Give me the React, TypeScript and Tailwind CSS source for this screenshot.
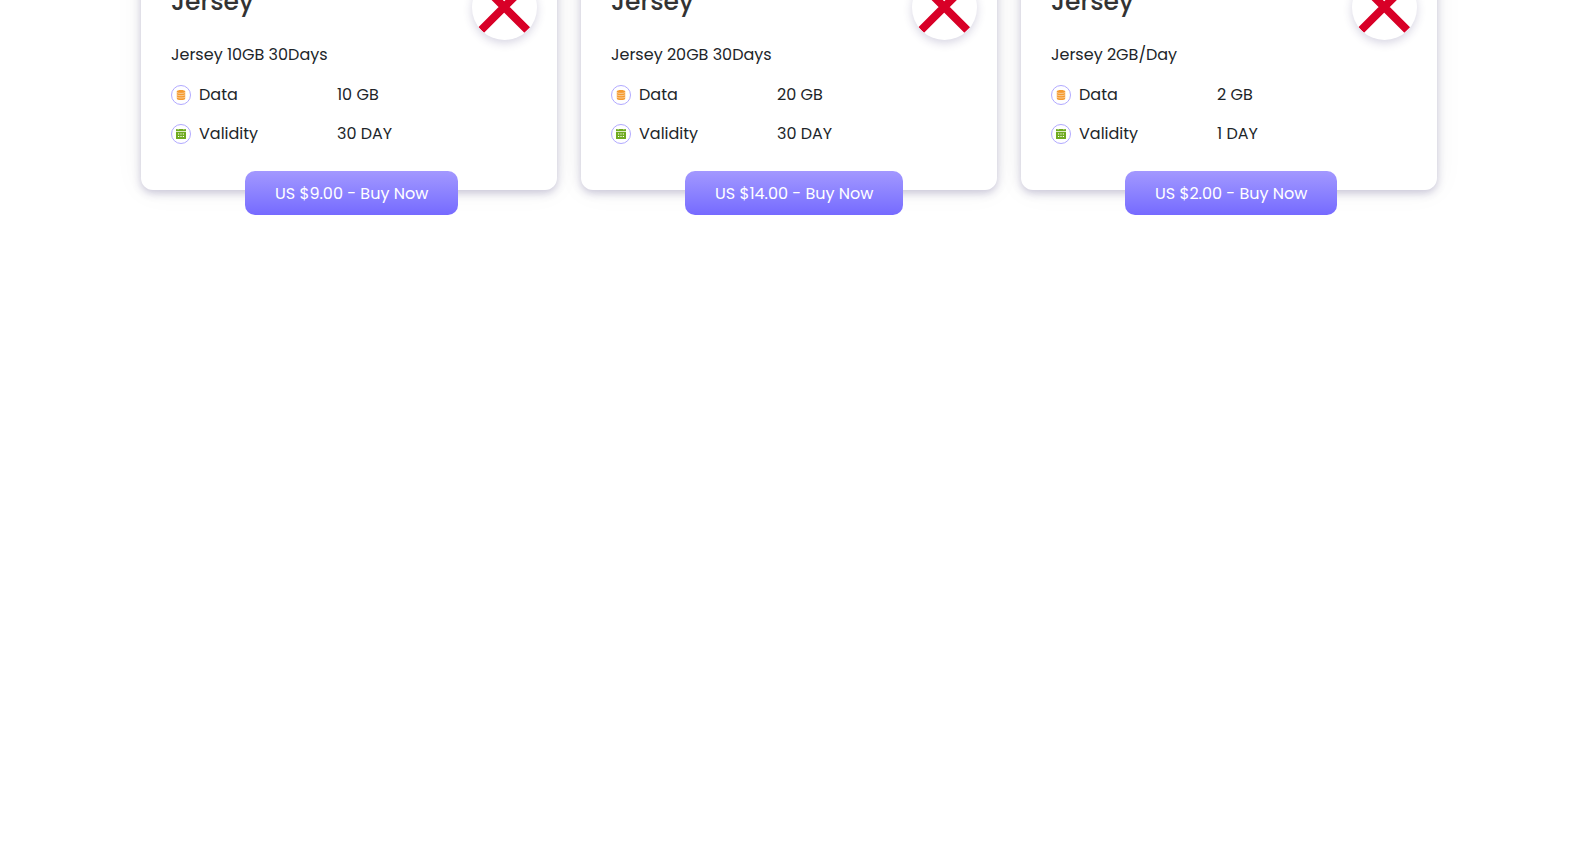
import React from 'react';
interface Plan {
  id: number;
  country: string;
  title: string;
  data: string;
  validity: string;
  price: string;
}
const plans: Plan[] = [
  { id: 1, country: 'Jersey', title: 'Jersey 10GB 30Days', data: '10 GB', validity: '30 DAY', price: '9.00' },
  { id: 2, country: 'Jersey', title: 'Jersey 20GB 30Days', data: '20 GB', validity: '30 DAY', price: '14.00' },
  { id: 3, country: 'Jersey', title: 'Jersey 2GB/Day', data: '2 GB', validity: '1 DAY', price: '2.00' }
];
const DataIcon = () => <svg viewBox="0 0 10 10" className="h-[10px] w-[10px]" aria-hidden="true">
    <path fill="#f59a2f" d="M.8 1.500C.8.500 2.700 0 5 0s4.200.5 4.200 1.500v7C9.200 9.500 7.300 10 5 10S.8 9.500.8 8.500z" />
    <path stroke="#fff" strokeWidth=".5" fill="none" d="M.8 2.500c1 .7 2.500.9 4.200.9s3.200-.2 4.200-.9M.8 4.800c1 .7 2.500.9 4.200.9s3.200-.2 4.200-.9M.8 7.100c1 .7 2.500.9 4.200.9s3.200-.2 4.200-.9" />
  </svg>;
const CalendarIcon = () => <svg viewBox="0 0 10 10" className="h-[10px] w-[10px]" aria-hidden="true">
    <path fill="#70ab22" d="M0 .6C0 .2.2 0 .6 0h1.100v.8h.8V0h5v.8h.8V0h1.100c.4 0 .6.2.6.6V2.200H0zM0 2.900h10v6.500c0 .4-.2.6-.6.6H.6c-.4 0-.6-.2-.6-.6z" />
    <path fill="#fff" d="M2 4.500h1.200v1.100H2zM4.400 4.500h1.200v1.100H4.400zM6.800 4.500H8v1.100H6.800zM2 7h1.200v1.100H2zM4.400 7h1.200v1.100H4.400zM6.800 7H8v1.100H6.800z" />
  </svg>;
// Saltire of Jersey, cropped to a circle by its parent
const JerseyFlag = () => <svg viewBox="0 0 65 65" className="h-full w-full" role="img" aria-label="Flag of Jersey">
    <path d="M9.200 9 55.200 55M55.200 9 9.200 55" stroke="#d80027" strokeWidth="8" fill="none" />
  </svg>;
interface FeatureProps {
  icon: React.ReactNode;
  label: string;
  value: string;
}
const Feature: React.FC<FeatureProps> = ({ icon, label, value }) => {
  return <li className="flex items-center">
      <div className="flex w-[166px] items-center gap-2">
        <span className="flex h-5 w-5 items-center justify-center rounded-full border border-[#b1a9ff]">
          {icon}
        </span>
        <span>{label}</span>
      </div>
      <span>{value}</span>
    </li>;
};
const PlanCard: React.FC<{ plan: Plan }> = ({ plan }) => {
  return <article className="relative rounded-xl bg-white px-[30px] pt-8 pb-11 shadow-[0_3px_9px_rgba(50,40,110,0.25),0_0_30px_rgba(0,0,0,0.05)]">
      <h2 className="text-[25px] leading-[30px] font-medium text-[#333333]">{plan.country}</h2>
      <div className="absolute top-5 right-5 h-[65px] w-[65px] overflow-hidden rounded-full bg-white shadow-[0_3px_10px_rgba(50,40,110,0.2)]">
        <JerseyFlag />
      </div>
      <p className="mt-[26px]">{plan.title}</p>
      <ul className="mt-4 space-y-[15px]">
        <Feature icon={<DataIcon />} label="Data" value={plan.data} />
        <Feature icon={<CalendarIcon />} label="Validity" value={plan.validity} />
      </ul>
      <button type="button" className="absolute -bottom-[25px] left-1/4 rounded-[10px] bg-linear-to-b from-[#a398ff] to-[#766aff] px-[30px] pt-[11px] pb-[9px] whitespace-nowrap text-white">
        US ${plan.price} - Buy Now
      </button>
    </article>;
};
const App: React.FC = () => {
  return <main className="min-h-screen overflow-hidden bg-white pr-[3px] font-['Poppins','Inter',sans-serif] text-base text-[#212529] antialiased">
      <section className="mx-auto -mt-[45px] grid max-w-[1320px] grid-cols-1 gap-6 px-3 pb-16 md:grid-cols-2 lg:grid-cols-3">
        {plans.map(plan => <PlanCard key={plan.id} plan={plan} />)}
      </section>
    </main>;
};
export default App;
